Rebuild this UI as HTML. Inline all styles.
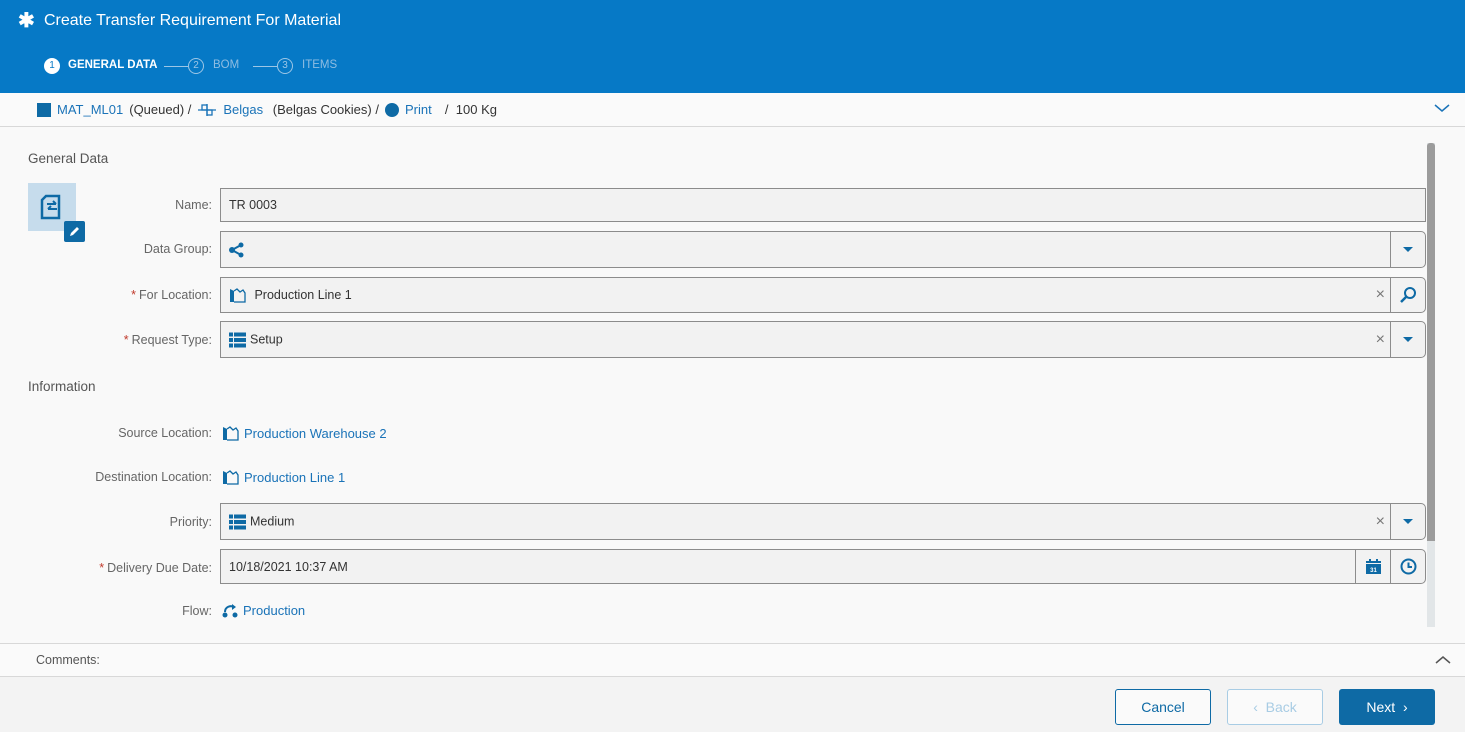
<!DOCTYPE html>
<html><head><meta charset="utf-8"><style>
*{box-sizing:border-box;margin:0;padding:0}
body{width:1465px;height:732px;overflow:hidden;background:#f9f9f9;font-family:"Liberation Sans",sans-serif;font-size:13px;color:#333;position:relative}
.abs{position:absolute}
.hdr{left:0;top:0;width:1465px;height:93px;background:#0679c6;color:#fff}
.lbl{right:1253px;color:#666;font-size:12.5px;text-align:right;white-space:nowrap}
.req{color:#c0392b;margin-right:3px}
.fld{left:220px;width:1206px;background:#f2f2f2;border:1px solid #8c8c8c;border-radius:0 5px 5px 0}
.fld .t{position:absolute;left:8px;top:50%;transform:translateY(-50%);color:#333;font-size:12.5px;display:flex;align-items:center;gap:4px}
.seg{position:absolute;top:0;bottom:0;width:35px;border-left:1px solid #8c8c8c;display:flex;align-items:center;justify-content:center}
.x{position:absolute;right:40px;top:50%;transform:translateY(-50%);color:#777;font-size:16px}
.tri{width:0;height:0;border-left:5px solid transparent;border-right:5px solid transparent;border-top:5px solid #0e6aa5}
.link{color:#1a73b8}
.sec{left:28px;color:#555;font-size:13.5px}
.btn{top:689px;height:36px;border-radius:3px;display:flex;align-items:center;justify-content:center;font-size:14px}
</style></head><body>
<div class="abs hdr">
 <div class="abs" style="left:18px;top:8px;font-size:20px;font-weight:bold">✱</div>
 <div class="abs" style="left:44px;top:12px;font-size:16px">Create Transfer Requirement For Material</div>
 <div class="abs" style="left:44px;top:58px;width:16px;height:16px;border-radius:50%;background:#fff;color:#0679c6;font-size:10px;text-align:center;line-height:16px">1</div>
 <div class="abs" style="left:68px;top:59px;font-size:11.5px;font-weight:bold">GENERAL DATA</div>
 <div class="abs" style="left:164px;top:66px;width:24px;border-top:1px solid #9cc6e6"></div>
 <div class="abs" style="left:188px;top:58px;width:16px;height:16px;border-radius:50%;border:1px solid #9cc6e6;color:#9cc6e6;font-size:10px;text-align:center;line-height:14px">2</div>
 <div class="abs" style="left:213px;top:59px;font-size:11.5px;color:#8fbde2">BOM</div>
 <div class="abs" style="left:253px;top:66px;width:24px;border-top:1px solid #9cc6e6"></div>
 <div class="abs" style="left:277px;top:58px;width:16px;height:16px;border-radius:50%;border:1px solid #9cc6e6;color:#9cc6e6;font-size:10px;text-align:center;line-height:14px">3</div>
 <div class="abs" style="left:302px;top:59px;font-size:11.5px;color:#8fbde2">ITEMS</div>
</div>
<div class="abs" style="left:0;top:93px;width:1465px;height:34px;background:#fafafa;border-bottom:1px solid #d8d8d8"></div>
<div class="abs" style="left:37px;top:102px;display:flex;align-items:center;gap:6px;font-size:13px;white-space:nowrap">
 <span style="display:inline-block;width:14px;height:14px;background:#0e6aa5"></span><span class="link">MAT_ML01</span><span>(Queued)&nbsp;/</span>
 <svg width="20" height="14" viewBox="0 0 20 14"><g fill="none" stroke="#1a73b8" stroke-width="1.3"><rect x="5" y="2" width="5" height="5"/><rect x="10" y="7" width="5" height="5"/><path d="M1 7H19M10 1V13"/></g></svg><span class="link">Belgas</span><span>&nbsp;(Belgas Cookies)&nbsp;/</span>
 <span style="display:inline-block;width:14px;height:14px;border-radius:50%;background:#0e6aa5"></span><span class="link">Print</span><span>&nbsp;&nbsp;/&nbsp;&nbsp;100 Kg</span>
</div>
<svg class="abs" style="left:1434px;top:103px" width="16" height="10" viewBox="0 0 16 10"><path d="M1 2L8 8L15 2" fill="none" stroke="#1a73b8" stroke-width="1.5"/></svg>

<div class="abs sec" style="top:151px">General Data</div>
<div class="abs" style="left:28px;top:183px;width:48px;height:48px;background:#c6dcec"></div>
<svg class="abs" style="left:39px;top:194px" width="26" height="26" viewBox="0 0 26 26"><path d="M7 2H20V24H3V6Z" fill="none" stroke="#0e6aa5" stroke-width="2.5"/><path d="M8 10H17M14 7L17 10M18 15H9M12 12L9 15" fill="none" stroke="#0e6aa5" stroke-width="2"/></svg>
<div class="abs" style="left:64px;top:221px;width:21px;height:21px;background:#0e6aa5;border-radius:2px"></div>
<svg class="abs" style="left:68px;top:225px" width="13" height="13" viewBox="0 0 13 13"><path d="M2 11L3 8L9 2L11 4L5 10Z" fill="#fff"/></svg>

<div class="abs lbl" style="top:198px">Name:</div>
<div class="abs fld" style="top:188px;height:34px;border-radius:0"><div class="t">TR 0003</div></div>

<div class="abs lbl" style="top:242px">Data Group:</div>
<div class="abs fld" style="top:231px;height:37px"><div class="t"><svg width="16" height="16" viewBox="0 0 16 16"><g fill="#0e6aa5"><circle cx="3" cy="8" r="3"/><circle cx="12" cy="3" r="2.5"/><circle cx="12" cy="13" r="2.5"/></g><path d="M3 8L12 3M3 8L12 13" stroke="#0e6aa5" stroke-width="2"/></svg></div><div class="seg" style="right:0"><div class="tri"></div></div></div>

<div class="abs lbl" style="top:288px"><span class="req">*</span>For Location:</div>
<div class="abs fld" style="top:277px;height:36px"><div class="t"><svg width="18" height="16" viewBox="0 0 18 16"><path d="M1 2L5 4V15H1Z" fill="#0e6aa5"/><path d="M5 4L8 2L11 5L14 3L16 6V15H5" fill="none" stroke="#0e6aa5" stroke-width="1.3"/></svg>&nbsp;Production Line 1</div><div class="x">×</div><div class="seg" style="right:0"><svg width="18" height="18" viewBox="0 0 18 18"><circle cx="11" cy="7" r="5" fill="none" stroke="#0e6aa5" stroke-width="2"/><path d="M7 11L2 16" stroke="#0e6aa5" stroke-width="2.5"/></svg></div></div>

<div class="abs lbl" style="top:333px"><span class="req">*</span>Request Type:</div>
<div class="abs fld" style="top:321px;height:37px"><div class="t"><svg width="17" height="15" viewBox="0 0 17 15"><g fill="#0e6aa5"><rect x="0" y="0" width="4" height="4"/><rect x="5" y="0" width="12" height="4"/><rect x="0" y="5.5" width="4" height="4"/><rect x="5" y="5.5" width="12" height="4"/><rect x="0" y="11" width="4" height="4"/><rect x="5" y="11" width="12" height="4"/></g></svg>Setup</div><div class="x">×</div><div class="seg" style="right:0"><div class="tri"></div></div></div>

<div class="abs sec" style="top:379px">Information</div>

<div class="abs lbl" style="top:426px">Source Location:</div>
<div class="abs" style="left:222px;top:425px;display:flex;align-items:center;gap:4px"><svg width="18" height="16" viewBox="0 0 18 16"><path d="M1 2L5 4V15H1Z" fill="#0e6aa5"/><path d="M5 4L8 2L11 5L14 3L16 6V15H5" fill="none" stroke="#0e6aa5" stroke-width="1.3"/></svg><span class="link">Production Warehouse 2</span></div>
<div class="abs lbl" style="top:470px">Destination Location:</div>
<div class="abs" style="left:222px;top:469px;display:flex;align-items:center;gap:4px"><svg width="18" height="16" viewBox="0 0 18 16"><path d="M1 2L5 4V15H1Z" fill="#0e6aa5"/><path d="M5 4L8 2L11 5L14 3L16 6V15H5" fill="none" stroke="#0e6aa5" stroke-width="1.3"/></svg><span class="link">Production Line 1</span></div>

<div class="abs lbl" style="top:515px">Priority:</div>
<div class="abs fld" style="top:503px;height:37px"><div class="t"><svg width="17" height="15" viewBox="0 0 17 15"><g fill="#0e6aa5"><rect x="0" y="0" width="4" height="4"/><rect x="5" y="0" width="12" height="4"/><rect x="0" y="5.5" width="4" height="4"/><rect x="5" y="5.5" width="12" height="4"/><rect x="0" y="11" width="4" height="4"/><rect x="5" y="11" width="12" height="4"/></g></svg>Medium</div><div class="x">×</div><div class="seg" style="right:0"><div class="tri"></div></div></div>

<div class="abs lbl" style="top:561px"><span class="req">*</span>Delivery Due Date:</div>
<div class="abs fld" style="top:549px;height:35px"><div class="t">10/18/2021 10:37 AM</div>
 <div class="seg" style="right:35px"><svg width="15" height="15" viewBox="0 0 15 15"><rect x="0" y="2" width="15" height="13" fill="#0e6aa5"/><rect x="3" y="0" width="2" height="3" fill="#0e6aa5"/><rect x="10" y="0" width="2" height="3" fill="#0e6aa5"/><rect x="0" y="4" width="15" height="1" fill="#f2f2f2"/><text x="7.5" y="13" font-size="6" fill="#fff" text-anchor="middle" font-family="Liberation Sans" font-weight="bold">31</text></svg></div>
 <div class="seg" style="right:0"><svg width="17" height="17" viewBox="0 0 17 17"><circle cx="8.5" cy="8.5" r="7" fill="none" stroke="#0e6aa5" stroke-width="2"/><path d="M8.5 4.5V9H12" fill="none" stroke="#0e6aa5" stroke-width="2"/></svg></div></div>

<div class="abs lbl" style="top:604px">Flow:</div>
<div class="abs" style="left:222px;top:603px;display:flex;align-items:center;gap:4px"><svg width="17" height="15" viewBox="0 0 17 15"><g fill="#0e6aa5"><circle cx="3" cy="12" r="2.5"/><circle cx="13" cy="12" r="2.5"/></g><path d="M3 9C3 4 8 2 12 4" fill="none" stroke="#0e6aa5" stroke-width="2"/><path d="M10 1L14 4L10 7Z" fill="#0e6aa5"/></svg><span class="link">Production</span></div>

<div class="abs" style="left:1427px;top:143px;width:8px;height:484px;background:#e2e6e8"></div>
<div class="abs" style="left:1427px;top:143px;width:8px;height:398px;background:#9c9c9c;border-radius:3px 3px 0 0"></div>

<div class="abs" style="left:0;top:643px;width:1465px;height:34px;background:#fafafa;border-top:1px solid #d8d8d8;border-bottom:1px solid #d8d8d8"></div>
<div class="abs" style="left:36px;top:653px;color:#555;font-size:12.5px">Comments:</div>
<svg class="abs" style="left:1435px;top:655px" width="16" height="10" viewBox="0 0 16 10"><path d="M1 8L8 2L15 8" fill="none" stroke="#555" stroke-width="1.5"/></svg>
<div class="abs" style="left:0;top:677px;width:1465px;height:55px;background:#f3f3f3"></div>
<div class="abs btn" style="left:1115px;width:96px;border:1px solid #0e6aa5;color:#0e6aa5;background:#fafafa">Cancel</div>
<div class="abs btn" style="left:1227px;width:96px;border:1px solid #a8cce4;color:#a8cce4;background:#fafafa">‹&nbsp; Back</div>
<div class="abs btn" style="left:1339px;width:96px;background:#0e6aa5;color:#fff">Next&nbsp; ›</div>
</body></html>
